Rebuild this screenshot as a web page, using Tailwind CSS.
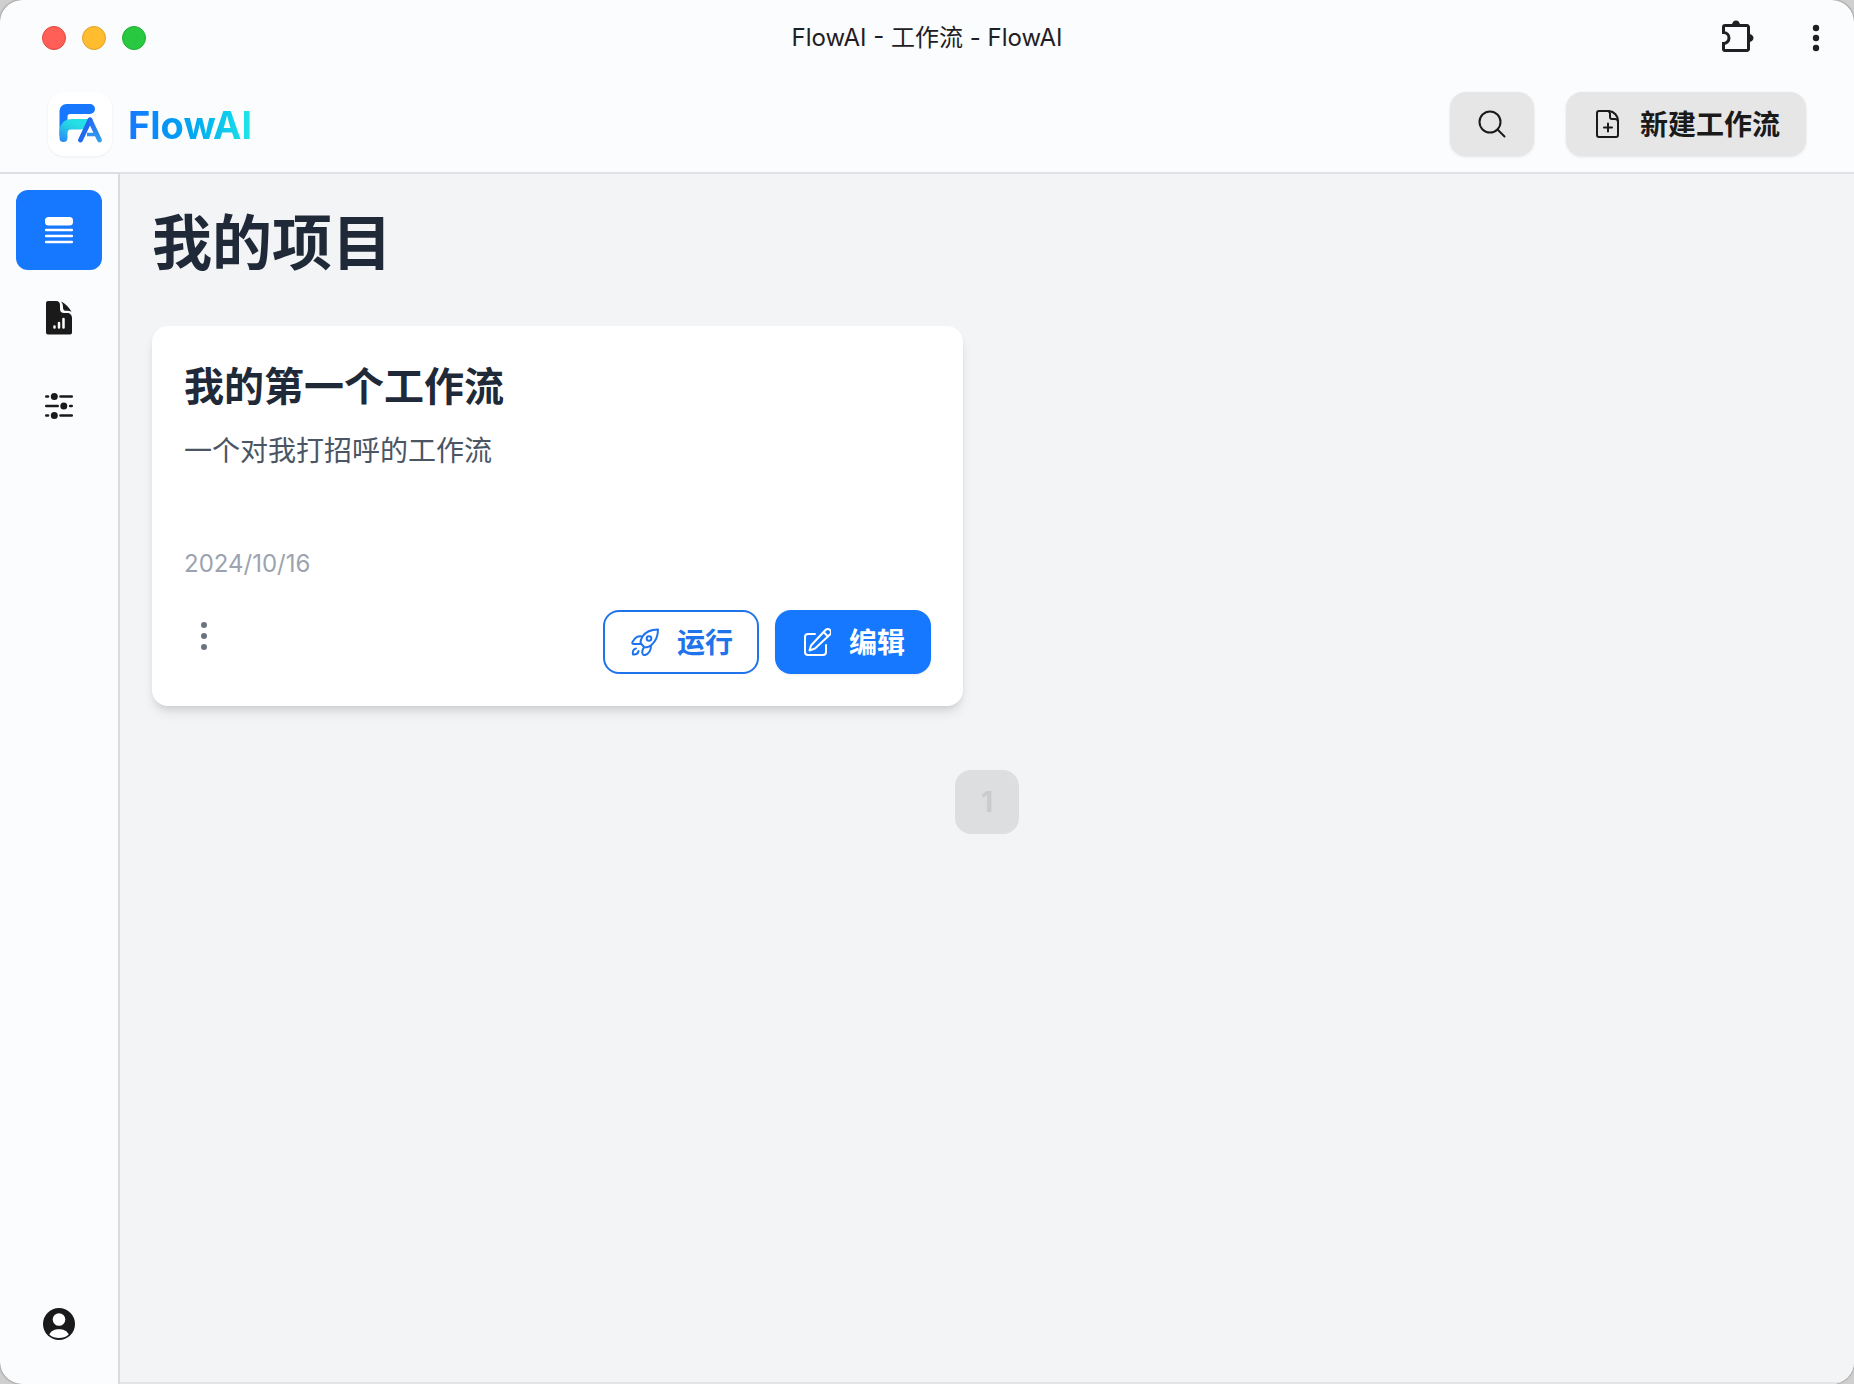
<!DOCTYPE html>
<html lang="zh-CN">
<head>
<meta charset="utf-8">
<meta name="viewport" content="width=device-width, initial-scale=1">
<title>FlowAI - 工作流 - FlowAI</title>
<script src="https://cdn.jsdelivr.net/npm/@tailwindcss/browser@4"></script>
</head>
<body class="bg-[#cfcfcf] font-['Inter','Noto_Sans_CJK_SC',sans-serif] text-[#1a1a1a]">
<div class="flex min-h-screen flex-col overflow-hidden rounded-[22px] bg-[#fbfcfe] shadow-[0_0_2px_rgba(0,0,0,0.6)]">
  <!-- Window title bar -->
  <div class="grid h-[76px] grid-cols-3 items-center px-6">
    <div class="flex gap-4 pl-[18px]">
      <button aria-label="关闭" class="size-6 rounded-full border border-[#e2463f] bg-[#ff5f57]"></button>
      <button aria-label="最小化" class="size-6 rounded-full border border-[#e0a028] bg-[#febc2e]"></button>
      <button aria-label="最大化" class="size-6 rounded-full border border-[#1fae33] bg-[#28c840]"></button>
    </div>
    <p class="text-center text-2xl whitespace-nowrap text-[#1f2023]">FlowAI - 工作流 - FlowAI</p>
    <div class="flex items-center justify-end gap-[46px]">
      <button aria-label="扩展程序" class="pb-1">
        <svg class="h-8 w-[34px]" viewBox="0 0 34 32" fill="none"><path d="M3 5.5h22a1.5 1.5 0 0 1 1.5 1.5v22a1.5 1.5 0 0 1-1.5 1.5H3A1.5 1.5 0 0 1 1.500 29v-5.500a5.500 5.500 0 0 0 0-11V7A1.500 1.500 0 0 1 3 5.500Z" stroke="#1f2023" stroke-width="3"/><path d="M10 5a4 4.500 0 0 1 8 0ZM27 14a4.500 4 0 0 1 0 8Z" fill="#1f2023"/></svg>
      </button>
      <button aria-label="更多" class="px-2">
        <svg class="h-8 w-[12px]" viewBox="0 0 12 32" fill="#1f2023"><circle cx="6" cy="6" r="3.200"/><circle cx="6" cy="16" r="3.200"/><circle cx="6" cy="26" r="3.200"/></svg>
      </button>
    </div>
  </div>

  <header class="flex h-[98px] items-center justify-between border-b-2 border-[#dfe2e6] px-12">
    <a href="#" class="flex items-center gap-4">
      <span class="flex size-16 items-center justify-center rounded-2xl bg-white shadow-[0_1px_3px_rgba(0,0,0,0.06)]">
        <svg class="size-11" viewBox="0 0 44 44" fill="none">
          <defs>
            <linearGradient id="teal" x1="4" y1="40" x2="16" y2="20" gradientUnits="userSpaceOnUse"><stop stop-color="#2a86f5"/><stop offset=".7" stop-color="#25cfe4"/><stop offset="1" stop-color="#25dfe6"/></linearGradient>
            <linearGradient id="leg" x1="30" y1="18" x2="42" y2="40" gradientUnits="userSpaceOnUse"><stop stop-color="#2468f0"/><stop offset="1" stop-color="#35a0ee"/></linearGradient>
          </defs>
          <path d="M1.500 34V9a7 7 0 0 1 7-7H32a5 5 0 0 1 0 10H12a2.500 2.500 0 0 0-2.500 2.500V26Z" fill="#1877ff"/>
          <path d="M1.500 36v-6C1.500 21 7 17 14 17h17.500c0 7-3.500 10.500-9 10.500H13c-2.500 0-3.500 1.500-3.500 4V36a4 4 0 0 1-8 0Z" fill="url(#teal)"/>
          <path d="M32 18 22.500 38" stroke="#1f6af0" stroke-width="4.800" stroke-linecap="round"/><path d="m32 18 9.500 20" stroke="url(#leg)" stroke-width="4.800" stroke-linecap="round"/><path d="M29 32.500h9" stroke="#3490ee" stroke-width="3.500"/>
        </svg>
      </span>
      <span class="bg-linear-to-r from-[#1677ff] via-[#04a5f0] to-[#22e6e6] bg-clip-text pt-0.5 text-[38px] leading-[48px] font-bold text-transparent">FlowAI</span>
    </a>
    <div class="flex gap-8">
      <button aria-label="搜索" class="flex h-16 w-[84px] items-center justify-center rounded-2xl bg-[#e6e6e6] shadow-[0_1px_3px_rgba(0,0,0,0.1)]">
        <svg class="size-7" viewBox="0 0 28 28" fill="none" stroke="#1a1a1a" stroke-width="2" stroke-linecap="round"><circle cx="12" cy="12" r="10.500"/><path d="m19.500 19.500 7 7"/></svg>
      </button>
      <button class="flex h-16 items-center gap-[18px] rounded-2xl bg-[#e6e6e6] pr-[26px] pl-7 text-[28px] leading-10 font-bold shadow-[0_1px_3px_rgba(0,0,0,0.1)]">
        <svg class="size-7" viewBox="0 0 28 28" fill="none" stroke="#1a1a1a" stroke-width="2" stroke-linejoin="round" stroke-linecap="round"><path d="M15 1H5a2 2 0 0 0-2 2v22a2 2 0 0 0 2 2h17a2 2 0 0 0 2-2V11A10 10 0 0 0 15 1Z"/><path d="M14 1a3 3 0 0 1 2 3v3a2 2 0 0 0 2 2h3a3 3 0 0 1 3 3M14 13.500v8M10 17.500h8"/></svg>
        <span class="pt-0.5">新建工作流</span>
      </button>
    </div>
  </header>

  <div class="flex flex-1">
    <nav class="flex w-[120px] flex-col gap-2 border-r-2 border-[#d9dbde] p-4 pb-5 shadow-[1px_0_3px_rgba(0,0,0,0.06)]">
      <a href="#" aria-label="工作流" class="flex h-20 items-center justify-center rounded-xl bg-[#1677ff]">
        <svg class="size-7" viewBox="0 0 28 28" fill="#fff"><rect y="1" width="28" height="8.500" rx="3.500"/><rect y="12.700" width="28" height="2.600" rx="1"/><rect y="18.700" width="28" height="2.600" rx="1"/><rect y="24.700" width="28" height="2.600" rx="1"/></svg>
      </a>
      <a href="#" aria-label="报表" class="flex h-20 items-center justify-center rounded-xl">
        <svg class="h-[34px] w-[26px]" viewBox="0 0 26 34"><path d="M2 0h8c3 0 4 2 4 4v4c0 3 2 4 4 4h3c3 0 5 2 5 5v14a2 2 0 0 1-2 2.500H2A2 2 0 0 1 0 31.500V2a2 2 0 0 1 2-2Z" fill="#1a1a1a"/><path d="M15 .500c4 2 8.500 6 10.500 10.500-1.500-1-3-1.200-5-1.200-2.500 0-3.500-.800-3.500-3.300 0-2.500-.300-4-2-6Z" fill="#1a1a1a"/><path d="M8.500 25.500v1M13 22v4.500M17.500 18v8.500" stroke="#fff" stroke-width="2.500" stroke-linecap="round"/></svg>
      </a>
      <a href="#" aria-label="设置" class="flex h-20 items-center justify-center rounded-xl">
        <svg class="size-7" viewBox="0 0 28 28" fill="#1a1a1a"><path d="M1.300 4.500H3M15.500 4.500h11.300M1.300 14h11.400M25.200 14h1.500M1.300 23.500H3M15.500 23.500h11.300" stroke="#1a1a1a" stroke-width="2.600" stroke-linecap="round"/><circle cx="9.300" cy="4.500" r="3.500"/><circle cx="18.800" cy="14" r="3.500"/><circle cx="9.300" cy="23.500" r="3.500"/></svg>
      </a>
      <a href="#" aria-label="账户" class="mt-auto flex h-20 items-center justify-center rounded-xl">
        <svg class="size-8" viewBox="0 0 32 32"><circle cx="16" cy="16" r="16" fill="#1a1a1a"/><circle cx="16" cy="11.500" r="6.300" fill="#fff"/><path d="M6.300 26.500C8 22.500 12 21.200 16 21.200s8 1.300 9.700 5.300C23 29.200 19.500 30 16 30s-7-.800-9.700-3.500Z" fill="#fff"/></svg>
      </a>
    </nav>

    <main class="flex-1 border-b-2 border-[#e4e5e7] bg-[#f3f4f6] p-8">
      <h1 class="mb-[46px] text-[60px] leading-[74px] font-bold text-[#1f2937]">我的项目</h1>
      <div class="grid grid-cols-2 gap-12">
        <article class="rounded-2xl bg-white p-8 shadow-[0_8px_12px_-2px_rgba(0,0,0,0.1),0_4px_8px_-4px_rgba(0,0,0,0.12)]">
          <h2 class="text-[40px] leading-[58px] font-bold text-[#1f2937]">我的第一个工作流</h2>
          <p class="mt-2 mb-14 h-16 text-[28px] leading-[54px] text-[#4b5563]">一个对我打招呼的工作流</p>
          <time datetime="2024-10-16" class="block h-[66px] text-2xl leading-10 text-[#9ca3af]">2024/10/16</time>
          <div class="flex items-start gap-4">
            <button aria-label="更多操作" class="mr-auto flex h-[52px] w-10 items-center justify-center">
              <svg class="h-7 w-[6px]" viewBox="0 0 6 28" fill="#6b7280"><circle cx="3" cy="3" r="3"/><circle cx="3" cy="14" r="3"/><circle cx="3" cy="25" r="3"/></svg>
            </button>
            <button class="flex h-16 items-center gap-[18px] rounded-2xl border-2 border-[#1f74ec] pr-6 pl-[26px] text-[28px] leading-10 font-bold text-[#1f74ec]">
              <svg class="size-7" viewBox="0 0 28 28" fill="none" stroke="currentColor" stroke-width="2" stroke-linejoin="round" stroke-linecap="round"><path d="M27 1.500C20 1.500 14.500 4 11.500 8.500c-1.500 2.500-2 4.500-2 6.500l4 4.500c2.500 0 4.500-.500 7-2.500C25 13 27 8 27 1.500ZM11.500 8.500C7 7.500 4.500 8.500 1.500 14c-.500 1.500 0 2 1.500 2h7M20 17.500c0 4.500-1 8-6 9.500-1.500.300-2 0-2.500-1.500-.500-2-.200-3.500 1-5.500M5 20.500C2 21 1.500 23.500 2 26.500c3 .300 5-.500 5.500-3.500"/><circle cx="18" cy="10.500" r="2.300"/></svg>
              <span class="pt-0.5">运行</span>
            </button>
            <button class="flex h-16 items-center gap-[18px] rounded-2xl bg-[#1677ff] pr-[26px] pl-7 text-[28px] leading-10 font-bold text-white shadow-[0_1px_3px_rgba(0,0,0,0.08)]">
              <svg class="size-7" viewBox="0 0 28 28" fill="none" stroke="currentColor" stroke-width="2" stroke-linejoin="round" stroke-linecap="round"><path d="M12 6H5a3 3 0 0 0-3 3v15a3 3 0 0 0 3 3h15a3 3 0 0 0 3-3v-7"/><path d="m6.500 22.500 1.500-5L22.500 2a3 3 0 0 1 4.500 4.500L12 20.500ZM20.500 4l4.500 4.500"/></svg>
              <span class="pt-0.5">编辑</span>
            </button>
          </div>
        </article>
      </div>
      <div class="mt-16 flex justify-center">
        <button disabled class="size-16 rounded-2xl bg-[#dddee0] text-[28px] font-bold text-[#c9cbce]">1</button>
      </div>
    </main>
  </div>
</div>
</body>
</html>
